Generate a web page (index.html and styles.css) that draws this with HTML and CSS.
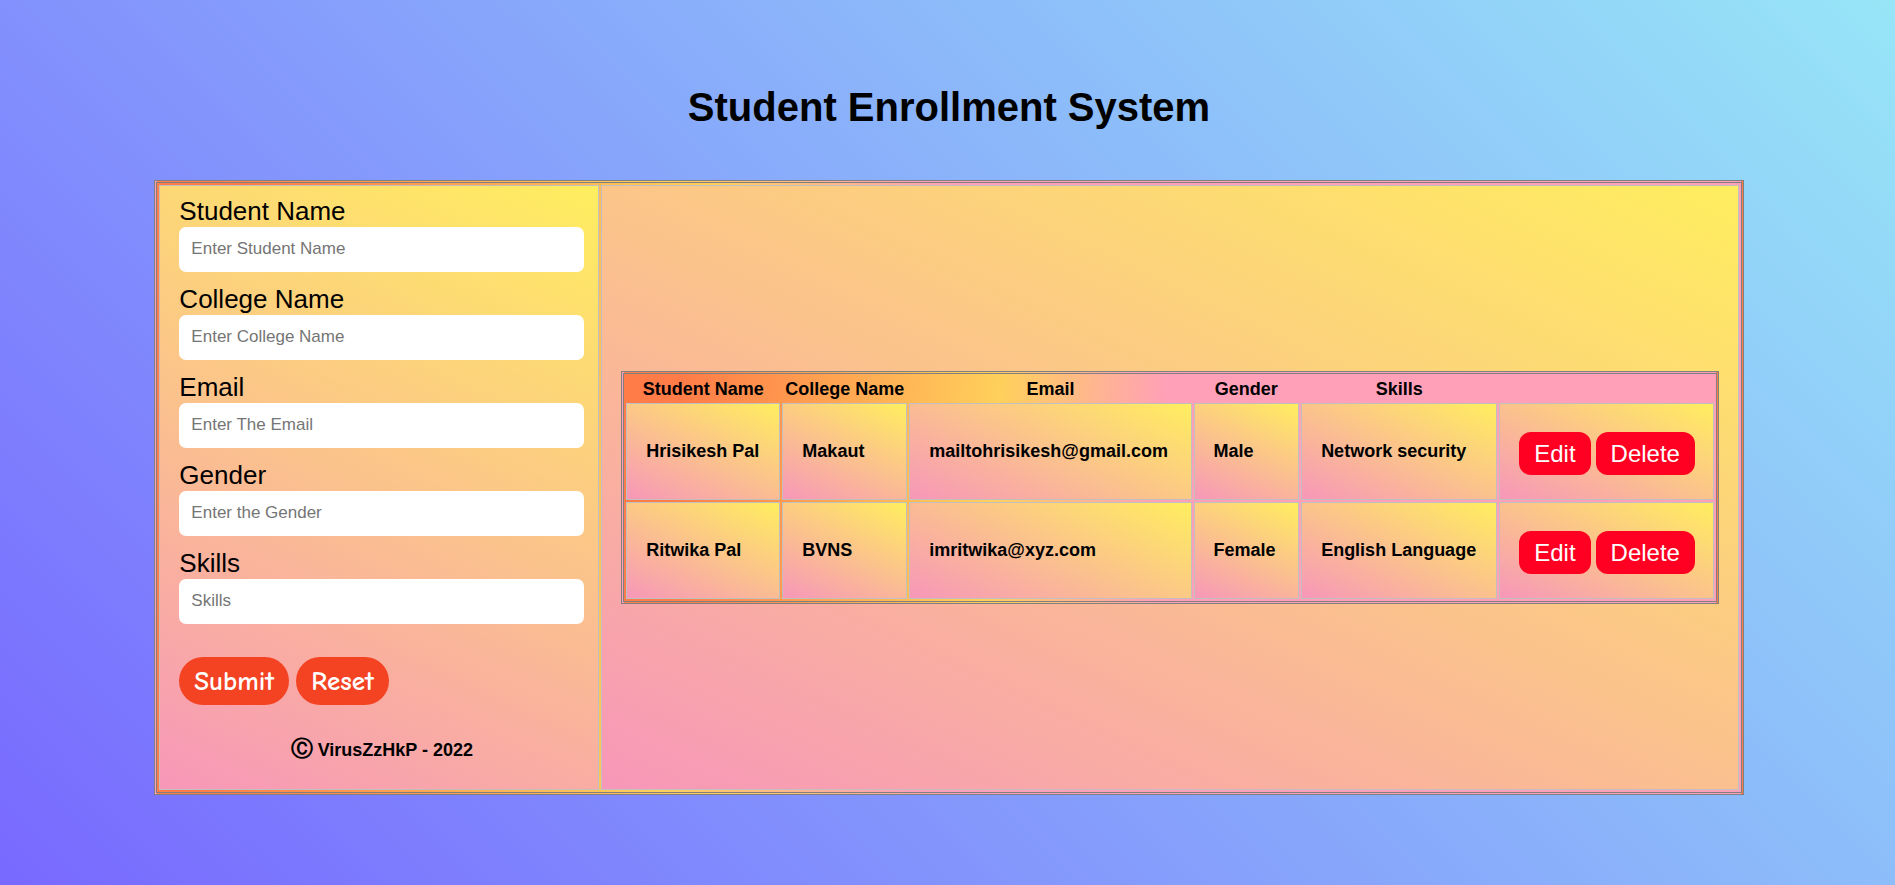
FILE: index.html
```html
<!DOCTYPE html>
<html lang="en">
<head>
<meta charset="utf-8">
<title>Student Enrollment System</title>
<link rel="stylesheet" href="styles.css">
</head>
<body>
<h1 class="title">Student Enrollment System</h1>
<main class="board">
  <section class="panel form-panel">
    <form class="form">
      <div class="field"><label for="name">Student Name</label><input id="name" type="text" placeholder="Enter Student Name"></div>
      <div class="field"><label for="college">College Name</label><input id="college" type="text" placeholder="Enter College Name"></div>
      <div class="field"><label for="email">Email</label><input id="email" type="text" placeholder="Enter The Email"></div>
      <div class="field"><label for="gender">Gender</label><input id="gender" type="text" placeholder="Enter the Gender"></div>
      <div class="field"><label for="skills">Skills</label><input id="skills" type="text" placeholder="Skills"></div>
      <div class="actions"><button class="pill" type="submit">Submit</button><button class="pill" type="reset">Reset</button></div>
    </form>
    <p class="credit"><span class="mark">Ⓒ</span> VirusZzHkP - 2022</p>
  </section>
  <section class="panel list-panel">
    <table class="list">
      <colgroup><col class="c-name"><col class="c-college"><col class="c-email"><col class="c-gender"><col class="c-skills"><col class="c-actions"></colgroup>
      <thead><tr><th>Student Name</th><th>College Name</th><th>Email</th><th>Gender</th><th>Skills</th><th></th></tr></thead>
      <tbody>
        <tr><td>Hrisikesh Pal</td><td>Makaut</td><td>mailtohrisikesh@gmail.com</td><td>Male</td><td>Network security</td><td><div class="row-actions"><button class="act" type="button">Edit</button><button class="act" type="button">Delete</button></div></td></tr>
        <tr><td>Ritwika Pal</td><td>BVNS</td><td>imritwika@xyz.com</td><td>Female</td><td>English Language</td><td><div class="row-actions"><button class="act" type="button">Edit</button><button class="act" type="button">Delete</button></div></td></tr>
      </tbody>
    </table>
  </section>
</main>
</body>
</html>
```
FILE: styles.css
```css
* { box-sizing: border-box; }
html { min-height: 100%; background: linear-gradient(45deg, #7869ff, #97e5f7); }
body { margin: 0; padding-left: 3px; font-family: "Liberation Sans", Arial, sans-serif; color: #000; }
.title { margin: 84px 0 50px; font-size: 40px; line-height: 46px; text-align: center; }
.board, .list {
  border: 3px double gray;
  background: linear-gradient(95deg, #ff7b48 5%, #ffd05b 34%, #ffa0b8 49%);
}
.board { display: grid; grid-template-columns: 441fr 1140fr; gap: 2px; width: 84%; margin: 0 auto 89px; padding: 2px; }
.panel, .list td { border: 1px solid silver; background: linear-gradient(25deg, #f797b9, #ffee5f); }
.form-panel { padding: 12px 14px 27px 19px; }
.form { display: flex; flex-direction: column; gap: 14px; }
.field label { display: block; margin-bottom: 2px; font-size: 26px; line-height: 27px; }
.field input { display: block; width: 100%; height: 45px; padding: 0 12px 2px; border: 0; border-radius: 7px; background: #fff; font: 17px "Liberation Sans", Arial, sans-serif; }
.field input::placeholder { color: #757575; }
.actions { display: flex; gap: 7px; margin-top: 19px; }
.pill { height: 48px; padding: 0 15px; border: 0; border-radius: 24px; background: #f44322; color: #fff; font: bold 27px "Comic Sans MS", "Comic Neue", cursive; }
.credit { margin: 32px 0 0; text-align: center; font-size: 18px; line-height: 24px; font-weight: bold; }
.mark { font-size: 22px; line-height: 24px; }
.list-panel { display: flex; align-items: center; padding: 19px; }
.list { width: 100%; table-layout: fixed; border-spacing: 2px; font-size: 18px; font-weight: bold; }
.list th { height: 25px; padding: 1px 0 0; white-space: nowrap; }
.list td { height: 97px; padding: 0 19px; white-space: nowrap; }
.c-name { width: 14.3%; }
.c-college { width: 11.6%; }
.c-email { width: 26.2%; }
.c-gender { width: 9.8%; }
.c-skills { width: 18.2%; }
.row-actions { display: flex; gap: 5px; padding-top: 4px; }
.act { height: 43px; padding: 0 15px; border: 0; border-radius: 12px; background: #ff0022; color: #fff; font: 24px "Liberation Sans", Arial, sans-serif; }
```
